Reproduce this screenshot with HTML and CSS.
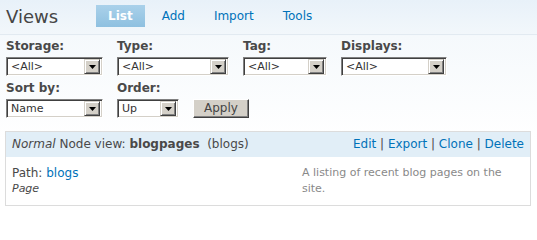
FILE: index.html
```html
<!DOCTYPE html>
<html>
<head>
<meta charset="utf-8">
<link rel="stylesheet" href="styles.css">
</head>
<body>
<div class="header">
  <h1 class="title">Views</h1>
  <ul class="tabs">
    <li><a class="tab active" href="#">List</a></li>
    <li><a class="tab" href="#">Add</a></li>
    <li><a class="tab" href="#">Import</a></li>
    <li><a class="tab" href="#">Tools</a></li>
  </ul>
</div>
<form class="filters">
  <div class="row">
    <div class="field">
      <label class="label">Storage:</label>
      <span class="select w-storage"><span class="value">&lt;All&gt;</span><span class="arrow"><svg width="7" height="4" viewBox="0 0 7 4"><path d="M0 0H7L3.5 4Z" fill="#000"/></svg></span></span>
    </div>
    <div class="field">
      <label class="label">Type:</label>
      <span class="select w-type"><span class="value">&lt;All&gt;</span><span class="arrow"><svg width="7" height="4" viewBox="0 0 7 4"><path d="M0 0H7L3.5 4Z" fill="#000"/></svg></span></span>
    </div>
    <div class="field">
      <label class="label">Tag:</label>
      <span class="select w-tag"><span class="value">&lt;All&gt;</span><span class="arrow"><svg width="7" height="4" viewBox="0 0 7 4"><path d="M0 0H7L3.5 4Z" fill="#000"/></svg></span></span>
    </div>
    <div class="field">
      <label class="label">Displays:</label>
      <span class="select w-displays"><span class="value">&lt;All&gt;</span><span class="arrow"><svg width="7" height="4" viewBox="0 0 7 4"><path d="M0 0H7L3.5 4Z" fill="#000"/></svg></span></span>
    </div>
  </div>
  <div class="row">
    <div class="field">
      <label class="label">Sort by:</label>
      <span class="select w-sort"><span class="value">Name</span><span class="arrow"><svg width="7" height="4" viewBox="0 0 7 4"><path d="M0 0H7L3.5 4Z" fill="#000"/></svg></span></span>
    </div>
    <div class="field">
      <label class="label">Order:</label>
      <span class="select w-order"><span class="value">Up</span><span class="arrow"><svg width="7" height="4" viewBox="0 0 7 4"><path d="M0 0H7L3.5 4Z" fill="#000"/></svg></span></span>
    </div>
    <div class="field field-button">
      <span class="button">Apply</span>
    </div>
  </div>
</form>
<div class="panel">
  <div class="panel-head">
    <div class="view-name"><em>Normal</em> Node view: <strong>blogpages</strong>&nbsp; (blogs)</div>
    <div class="ops"><a href="#">Edit</a> | <a href="#">Export</a> | <a href="#">Clone</a> | <a href="#">Delete</a></div>
  </div>
  <div class="panel-body">
    <div class="info">
      <div class="path">Path: <a href="#">blogs</a></div>
      <div class="kind">Page</div>
    </div>
    <div class="desc">A listing of recent blog pages on the site.</div>
  </div>
</div>
</body>
</html>
```
FILE: styles.css
```css
html, body {
  margin: 0;
  padding: 0;
}
body {
  font-family: "DejaVu Sans", Verdana, sans-serif;
  color: #494949;
  background: linear-gradient(#e8f1f9 0, #f2f7fb 34px, #f5f9fc 36px, #ffffff 140px) no-repeat;
  width: 537px;
  height: 212px;
  overflow: hidden;
}
a {
  color: #0072b9;
  text-decoration: none;
}
.header {
  display: flex;
  height: 34px;
  border-bottom: 1px solid #e2eaf1;
}
.title {
  flex: 0 0 96px;
  box-sizing: border-box;
  margin: 0;
  padding-left: 6px;
  font-size: 18px;
  line-height: 33px;
  font-weight: normal;
  color: #454545;
}
.tabs {
  display: flex;
  list-style: none;
  margin: 5px 0 0;
  padding: 0;
}
.tab {
  display: block;
  height: 22px;
  line-height: 22px;
  padding: 0 12px;
  margin-right: 5px;
  font-size: 12px;
}
.tab.active {
  background: linear-gradient(#aad1ea, #8ec0e0);
  color: #fff;
  font-weight: bold;
}
.filters {
  margin: 0;
  padding: 2px 6px 0;
}
.row {
  display: flex;
  gap: 14px;
  margin-bottom: 3px;
}
.field {
  display: flex;
  flex-direction: column;
}
.field-button {
  justify-content: flex-end;
}
.label {
  font-size: 12px;
  font-weight: bold;
  line-height: 16px;
  padding-top: 1px;
  height: 19px;
  color: #494949;
}
.select {
  display: flex;
  align-items: center;
  box-sizing: border-box;
  height: 19px;
  background: #fff;
  border: 1px solid;
  border-color: #808080 #ffffff #ffffff #808080;
  box-shadow: inset 1px 1px 0 #404040, inset -1px -1px 0 #d4d0c8;
  padding: 2px 2px 2px 4px;
}
.value {
  flex: 1;
  font-size: 11px;
  line-height: 14px;
  color: #333;
}
.arrow {
  display: flex;
  align-items: center;
  justify-content: center;
  box-sizing: border-box;
  width: 16px;
  height: 15px;
  background: #d4d0c8;
  border: 1px solid;
  border-color: #d4d0c8 #404040 #404040 #d4d0c8;
  box-shadow: inset 1px 1px 0 #fff, inset -1px -1px 0 #808080;
}
.w-storage { width: 97px; }
.w-type { width: 112px; }
.w-tag { width: 84px; }
.w-displays { width: 106px; }
.w-sort { width: 97px; }
.w-order { width: 62px; }
.button {
  display: block;
  box-sizing: border-box;
  width: 56px;
  height: 19px;
  line-height: 17px;
  text-align: center;
  font-size: 12px;
  color: #444;
  background: #d4d0c8;
  border: 1px solid;
  border-color: #fff #404040 #404040 #fff;
  box-shadow: inset -1px -1px 0 #808080;
}
.panel {
  margin: 13px 6px 0 5px;
  border: 1px solid #dcdcdc;
  background: #fff;
}
.panel-head {
  display: flex;
  justify-content: space-between;
  background: #e1eef7;
  height: 25px;
  padding: 0 6px;
  font-size: 12px;
  line-height: 25px;
  color: #494949;
}
.panel-body {
  display: flex;
  padding: 8px 6px 10px;
  height: 30px;
}
.info {
  flex: 1;
}
.path {
  font-size: 12px;
  line-height: 16px;
}
.kind {
  font-size: 11px;
  line-height: 16px;
  font-style: italic;
}
.desc {
  width: 222px;
  font-size: 11px;
  line-height: 16px;
  color: #898989;
}
```
